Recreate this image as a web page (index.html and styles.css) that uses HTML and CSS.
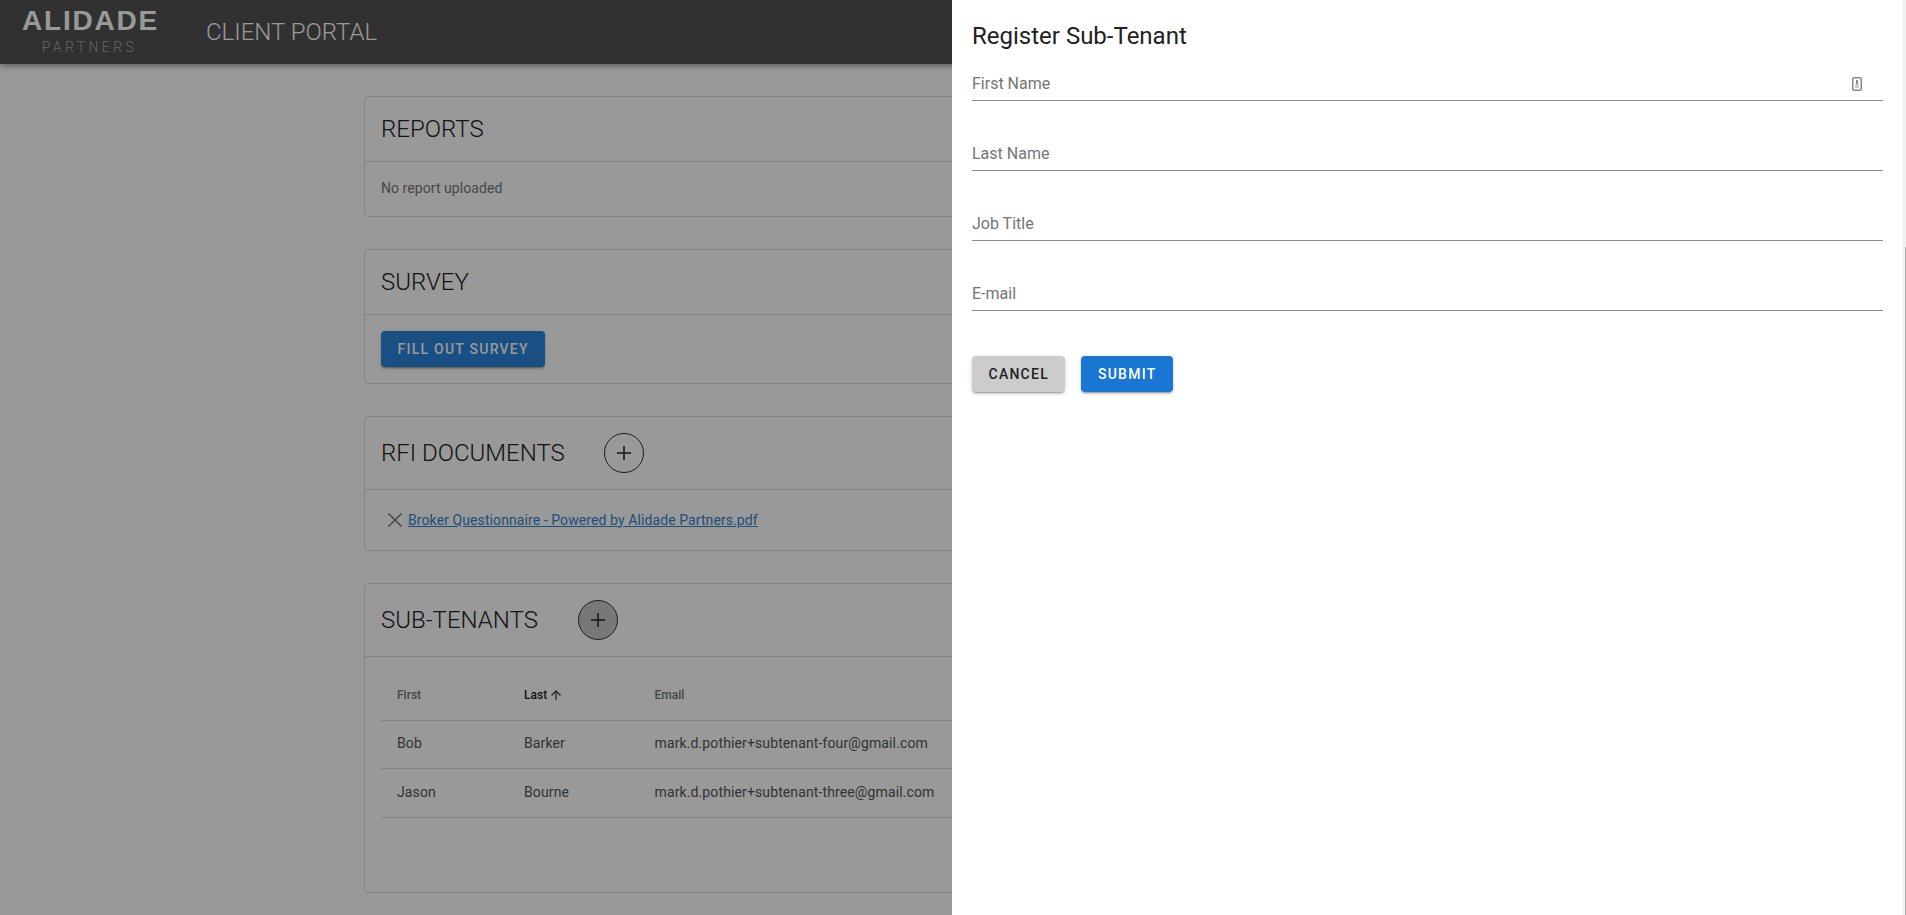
FILE: index.html
```html
<!DOCTYPE html>
<html lang="en">
<head>
    <meta charset="UTF-8">
    <title>Client Portal</title>
    <link rel="stylesheet" href="styles.css">
</head>
<body>
    <header class="topbar">
        <div class="logo">
            <div class="logo-main">ALIDADE</div>
            <div class="logo-sub">PARTNERS</div>
        </div>
        <div class="portal-title">CLIENT PORTAL</div>
    </header>

    <main class="content">
        <section class="card">
            <div class="card-head"><h2>REPORTS</h2></div>
            <div class="card-body muted">No report uploaded</div>
        </section>

        <section class="card">
            <div class="card-head"><h2>SURVEY</h2></div>
            <div class="card-body">
                <button class="btn btn-survey">FILL OUT SURVEY</button>
            </div>
        </section>

        <section class="card">
            <div class="card-head with-add">
                <h2>RFI DOCUMENTS</h2>
                <button class="add-btn">
                    <svg viewBox="0 0 24 24" width="24" height="24"><path d="M12 5v14M5 12h14"/></svg>
                </button>
            </div>
            <div class="card-body doc-row">
                <svg class="doc-x" viewBox="0 0 16 16" width="16" height="16"><path d="M1.500 1.500l13 13M14.500 1.500l-13 13"/></svg>
                <a href="#" class="doc-link">Broker Questionnaire - Powered by Alidade Partners.pdf</a>
            </div>
        </section>

        <section class="card">
            <div class="card-head with-add">
                <h2>SUB-TENANTS</h2>
                <button class="add-btn add-btn-focus">
                    <svg viewBox="0 0 24 24" width="24" height="24"><path d="M12 5v14M5 12h14"/></svg>
                </button>
            </div>
            <div class="card-body table-wrap">
                <table class="tenants">
                    <thead>
                        <tr>
                            <th class="col-first">First</th>
                            <th class="col-last sorted">Last
                                <svg class="sort-arrow" viewBox="0 0 12 12" width="12" height="12"><path d="M6 11V2M1.500 6.500L6 2l4.500 4.500"/></svg>
                            </th>
                            <th>Email</th>
                        </tr>
                    </thead>
                    <tbody>
                        <tr><td>Bob</td><td>Barker</td><td>mark.d.pothier+subtenant-four@gmail.com</td></tr>
                        <tr><td>Jason</td><td>Bourne</td><td>mark.d.pothier+subtenant-three@gmail.com</td></tr>
                    </tbody>
                </table>
            </div>
        </section>
    </main>

    <div class="backdrop"></div>

    <aside class="drawer">
        <h3>Register Sub-Tenant</h3>
        <form class="reg-form">
            <div class="field">
                <span class="field-label">First Name</span>
                <svg class="field-icon" viewBox="0 0 10 14" width="10" height="14"><rect x="0.750" y="0.750" width="8.500" height="12.500" rx="1"/><path class="fill" d="M3 7.500h4v3.500H3z"/><path class="dot" d="M5 3v4.500"/></svg>
            </div>
            <div class="field"><span class="field-label">Last Name</span></div>
            <div class="field"><span class="field-label">Job Title</span></div>
            <div class="field"><span class="field-label">E-mail</span></div>
            <div class="form-actions">
                <button type="button" class="btn btn-cancel">CANCEL</button>
                <button type="button" class="btn btn-submit">SUBMIT</button>
            </div>
        </form>
        <div class="drawer-scroll"><div class="drawer-thumb"></div></div>
    </aside>
</body>
</html>
```

FILE: styles.css
```css
/* General */
html, body {
    height: 100%;
}

body {
    margin: 0;
    font-family: Roboto, "Liberation Sans", sans-serif;
    background-color: #fff;
    color: #333;
    overflow: hidden;
}

/* Top bar */
.topbar {
    height: 64px;
    background-color: #525252;
    display: flex;
    align-items: center;
    padding-left: 22px;
    box-shadow: 0 2px 6px rgba(0, 0, 0, 0.4);
}

.logo {
    width: 135px;
    text-align: center;
    flex-shrink: 0;
}

.logo-main {
    font-family: "Liberation Sans", Arial, sans-serif;
    font-weight: 700;
    font-size: 28px;
    line-height: 24px;
    letter-spacing: 1.800px;
    color: #fff;
    white-space: nowrap;
}

.logo-sub {
    font-size: 14px;
    font-weight: 300;
    line-height: 16px;
    letter-spacing: 3.400px;
    color: #aaa;
    margin-top: 6px;
}

.portal-title {
    font-size: 24px;
    font-weight: 300;
    color: #fff;
    margin-left: 49px;
}

/* Cards */
.content {
    width: 1151px;
    margin-left: 364px;
    padding-top: 32px;
}

.card {
    border: 1px solid #ddd;
    border-radius: 4px;
    margin-bottom: 32px;
}

.card-head {
    padding: 16px;
    border-bottom: 1px solid #ddd;
}

.card-head h2 {
    margin: 0;
    font-size: 24px;
    font-weight: 300;
    line-height: 32px;
    color: #222;
}

.with-add {
    display: flex;
    align-items: center;
}

.card-body {
    padding: 16px;
    font-size: 14px;
    line-height: 21px;
}

.muted {
    color: #777;
    padding-bottom: 17px;
    letter-spacing: 0.060px;
}

.btn {
    border: none;
    border-radius: 4px;
    height: 36px;
    font-family: Roboto, sans-serif;
    font-size: 14px;
    font-weight: 500;
    letter-spacing: 1.250px;
    padding: 0 16.500px;
    box-shadow: 0 3px 1px -2px rgba(0,0,0,.2), 0 2px 2px 0 rgba(0,0,0,.14), 0 1px 5px 0 rgba(0,0,0,.12);
}

.btn-survey {
    display: block;
    background-color: #2a84d9;
    color: #fff;
}

.add-btn {
    width: 40px;
    height: 40px;
    border-radius: 50%;
    border: 1px solid #333;
    background: transparent;
    margin-left: 39px;
    padding: 0;
    display: flex;
    align-items: center;
    justify-content: center;
}

.add-btn svg path {
    stroke: #222;
    stroke-width: 1.500;
    fill: none;
}

.add-btn-focus {
    background-color: #c8c8c8;
    margin-left: 40px;
}

.doc-row {
    display: flex;
    align-items: center;
    height: 60px;
    box-sizing: border-box;
    padding: 0 16px 0 22px;
    gap: 5px;
}

.doc-x path {
    stroke: #777;
    stroke-width: 1.500;
    fill: none;
}

.doc-link {
    color: #2e85d0;
    font-size: 14px;
    letter-spacing: 0.090px;
}

.table-wrap {
    padding: 16px 16px 74px;
}

.tenants {
    width: 100%;
    border-collapse: collapse;
    font-size: 14px;
}

.tenants th {
    text-align: left;
    font-size: 12px;
    font-weight: 500;
    color: #777;
    height: 45px;
    padding: 0 16px 2px;
    border-bottom: 1px solid #ddd;
}

.tenants td {
    height: 45px;
    padding: 0 16px 2px;
    border-bottom: 1px solid #ddd;
    color: #555;
    letter-spacing: 0.120px;
}

.tenants tr:last-child td {
    height: 46px;
}

.col-first {
    width: 95px;
}

.col-last {
    width: 98.500px;
}

.tenants th.sorted {
    color: #222;
}

.sort-arrow {
    vertical-align: -2px;
}

.sort-arrow path {
    stroke: #444;
    stroke-width: 1.300;
    fill: none;
}

/* Overlay + drawer */
.backdrop {
    position: fixed;
    top: 0;
    left: 0;
    right: 0;
    bottom: 0;
    background-color: rgba(0, 0, 0, 0.4);
}

.drawer {
    position: fixed;
    top: 0;
    bottom: 0;
    left: 952px;
    right: 0;
    background-color: #fff;
    padding: 18px 23px 0 20px;
    box-sizing: border-box;
}

.drawer h3 {
    margin: 0;
    font-size: 24px;
    font-weight: 400;
    line-height: 36px;
    color: #212121;
}

.reg-form {
    margin-top: 15px;
}

.field {
    position: relative;
    margin-bottom: 38px;
}

.field-label {
    display: block;
    height: 31px;
    font-size: 16px;
    line-height: 29px;
    color: #757575;
    border-bottom: 1px solid #8c8c8c;
}

.field-icon {
    position: absolute;
    right: 21px;
    top: 8px;
}

.field-icon rect {
    fill: none;
    stroke: #888;
    stroke-width: 1.500;
}

.field-icon .dot {
    stroke: #666;
    stroke-width: 1.500;
    fill: none;
}

.field-icon .fill {
    fill: #ccc;
}

.form-actions {
    display: flex;
    gap: 16px;
    margin-top: 45px;
}

.btn-cancel {
    background-color: #ccc;
    color: #222;
}

.btn-submit {
    background-color: #1976d2;
    color: #fff;
}

/* thin scroll track on the drawer */
.drawer-scroll {
    position: absolute;
    top: 0;
    right: 0;
    bottom: 0;
    width: 3px;
    background-color: #f1f1f1;
}

.drawer-thumb {
    margin-top: 247px;
    margin-left: 2px;
    height: 668px;
    background-color: #aaa;
}
```
